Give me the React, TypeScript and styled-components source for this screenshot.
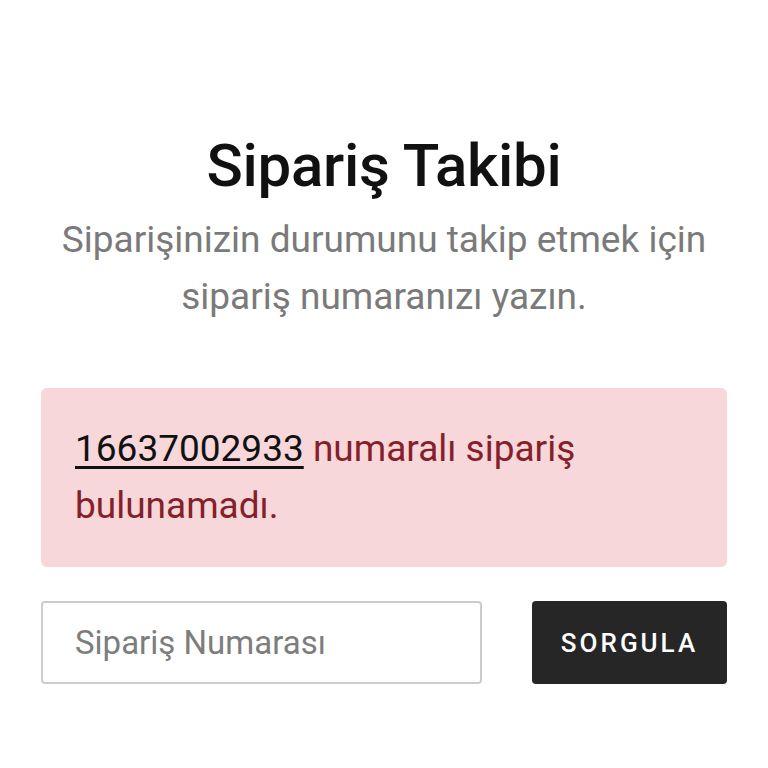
import styled, { createGlobalStyle } from "styled-components";

const GlobalStyle = createGlobalStyle`
  body {
    margin: 0;
    background: #ffffff;
    font-family: Roboto, "Noto Sans", sans-serif;
  }
`;

const Page = styled.div`
  width: 768px;
  height: 768px;
  box-sizing: border-box;
  padding: 125px 41px 0;
  display: flex;
  flex-direction: column;
`;

const Title = styled.h1`
  margin: 0;
  text-align: center;
  font-size: 60px;
  font-weight: 500;
  line-height: 82px;
  color: #111111;
  letter-spacing: -0.3px;
`;

const Subtitle = styled.p`
  margin: 4px 0 0;
  text-align: center;
  font-size: 37px;
  font-weight: 400;
  line-height: 57px;
  color: #7a7a7a;
`;

const Alert = styled.div`
  margin-top: 63px;
  background: #f8d7da;
  border-radius: 6px;
  padding: 32px 34px 33px;
  font-size: 37px;
  line-height: 57px;
  color: #842029;
`;

const OrderNo = styled.span`
  color: #111111;
  text-decoration: underline;
  text-underline-offset: 5px;
  text-decoration-thickness: 3px;
`;

const Form = styled.form`
  margin-top: 34px;
  display: flex;
  gap: 50px;
`;

const Input = styled.input`
  flex: 1;
  min-width: 0;
  height: 83px;
  box-sizing: border-box;
  border: 2px solid #cccccc;
  border-radius: 4px;
  padding: 0 32px;
  font-family: inherit;
  font-size: 33px;
  color: #333;
  outline: none;
  &::placeholder {
    color: #7d7d7d;
  }
`;

const Button = styled.button`
  flex: 0 0 195px;
  height: 83px;
  border: none;
  border-radius: 4px;
  background: #262626;
  color: #ffffff;
  font-family: inherit;
  font-size: 26px;
  font-weight: 500;
  letter-spacing: 3px;
  cursor: pointer;
`;

export default function App() {
  return (
    <>
      <GlobalStyle />
      <Page>
        <Title>Sipariş Takibi</Title>
        <Subtitle>
          Siparişinizin durumunu takip etmek için
          <br />
          sipariş numaranızı yazın.
        </Subtitle>
        <Alert>
          <OrderNo>16637002933</OrderNo> numaralı sipariş
          <br />
          bulunamadı.
        </Alert>
        <Form onSubmit={(e) => e.preventDefault()}>
          <Input placeholder="Sipariş Numarası" />
          <Button type="submit">SORGULA</Button>
        </Form>
      </Page>
    </>
  );
}
